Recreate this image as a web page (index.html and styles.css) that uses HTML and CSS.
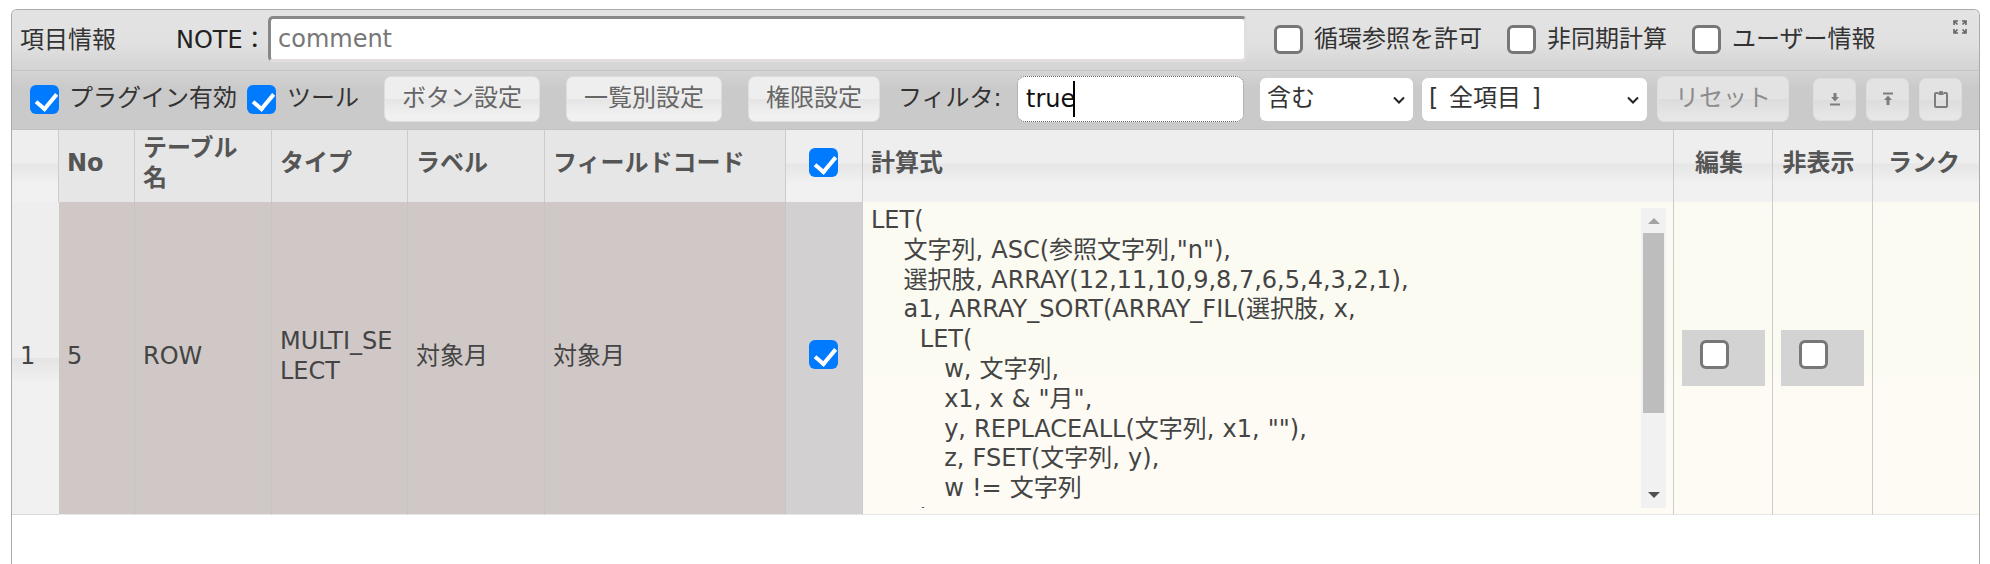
FILE: index.html
```html
<!DOCTYPE html>
<html lang="ja">
<head>
<meta charset="utf-8">
<title>項目情報</title>
<link rel="stylesheet" href="styles.css">
</head>
<body>
<section class="panel">
  <header class="topbar">
    <span class="title">項目情報</span>
    <label class="note-label" for="note">NOTE：</label>
    <input class="note-input" id="note" type="text" placeholder="comment">
    <label class="opt opt-first"><input class="cb" type="checkbox"><span>循環参照を許可</span></label>
    <label class="opt"><input class="cb" type="checkbox"><span>非同期計算</span></label>
    <label class="opt"><input class="cb" type="checkbox"><span>ユーザー情報</span></label>
    <svg class="fullscreen" viewBox="0 0 14 14" width="14" height="14" aria-hidden="true">
      <path d="M1 5V1h4M1 1l3.500 3.500M13 5V1H9M13 1 9.500 4.500M1 9v4h4M1 13l3.500-3.500M13 9v4H9M13 13 9.500 9.500"/>
    </svg>
  </header>

  <div class="toolbar">
    <label class="tool-check"><input class="cb" type="checkbox" checked><span>プラグイン有効</span></label>
    <label class="tool-check second"><input class="cb" type="checkbox" checked><span>ツール</span></label>
    <button class="btn first-btn" type="button">ボタン設定</button>
    <button class="btn" type="button">一覧別設定</button>
    <button class="btn" type="button">権限設定</button>
    <label class="filter-label" for="filter">フィルタ:</label>
    <div class="filter-box"><input class="filter-input" id="filter" type="text" value="true"><i class="caret"></i></div>
    <div class="sel sel-a">
      <select><option>含む</option></select>
      <svg class="chev" viewBox="0 0 12 8" width="12" height="8" aria-hidden="true"><path d="M1 1.500 6 6.500 11 1.500"/></svg>
    </div>
    <div class="sel sel-b">
      <select><option>[ 全項目 ]</option></select>
      <svg class="chev" viewBox="0 0 12 8" width="12" height="8" aria-hidden="true"><path d="M1 1.500 6 6.500 11 1.500"/></svg>
    </div>
    <button class="btn reset" type="button">リセット</button>
    <button class="icon-btn ib-first" type="button" aria-label="download">
      <svg viewBox="0 0 12 14" width="12" height="14"><path class="fill" d="M4.500 1h3v4H10L6 9.500 2 5h2.500z"/><path class="line" d="M1 12.500h10"/></svg>
    </button>
    <button class="icon-btn" type="button" aria-label="upload">
      <svg viewBox="0 0 12 14" width="12" height="14"><path class="line" d="M1 1.500h10"/><path class="fill" d="M6 3.500 10 8H7.500v5h-3V8H2z"/></svg>
    </button>
    <button class="icon-btn" type="button" aria-label="clipboard">
      <svg viewBox="0 0 14 18" width="14" height="18"><path class="line" d="M4.500 3H2a1 1 0 0 0-1 1v12a1 1 0 0 0 1 1h10a1 1 0 0 0 1-1V4a1 1 0 0 0-1-1H9.500"/><path class="fill" d="M4.500 3.500 5.500 1h3l1 2.500V5h-5z"/></svg>
    </button>
  </div>

  <table class="grid">
    <colgroup>
      <col class="c-num"><col class="c-no"><col class="c-table"><col class="c-type"><col class="c-label"><col class="c-code"><col class="c-check"><col class="c-formula"><col class="c-edit"><col class="c-hide"><col class="c-rank">
    </colgroup>
    <thead>
      <tr>
        <th class="shade"></th>
        <th class="flat">No</th>
        <th class="flat">テーブル<br>名</th>
        <th class="flat">タイプ</th>
        <th class="flat">ラベル</th>
        <th class="flat">フィールドコード</th>
        <th class="shade th-check"><input class="cb" type="checkbox" checked></th>
        <th class="shade">計算式</th>
        <th class="shade center">編集</th>
        <th class="shade center">非表示</th>
        <th class="shade center th-rank">ランク</th>
      </tr>
    </thead>
    <tbody>
      <tr>
        <td class="rownum">1</td>
        <td class="locked">5</td>
        <td class="locked">ROW</td>
        <td class="locked">MULTI_SE<br>LECT</td>
        <td class="locked">対象月</td>
        <td class="locked">対象月</td>
        <td class="locked-check"><input class="cb" type="checkbox" checked></td>
        <td class="formula-cell">
          <div class="formula">
            <pre class="code">LET(
    文字列, ASC(参照文字列,"n"),
    選択肢, ARRAY(12,11,10,9,8,7,6,5,4,3,2,1),
    a1, ARRAY_SORT(ARRAY_FIL(選択肢, x,
      LET(
         w, 文字列,
         x1, x &amp; "月",
         y, REPLACEALL(文字列, x1, ""),
         z, FSET(文字列, y),
         w != 文字列
      )</pre>
            <div class="scrollbar">
              <span class="arrow-up"></span>
              <span class="thumb"></span>
              <span class="arrow-down"></span>
            </div>
          </div>
        </td>
        <td class="pale"><div class="cb-wrap"><input class="cb" type="checkbox"></div></td>
        <td class="pale"><div class="cb-wrap"><input class="cb" type="checkbox"></div></td>
        <td class="pale"></td>
      </tr>
    </tbody>
  </table>
</section>
</body>
</html>
```

FILE: styles.css
```css
* {
  box-sizing: border-box;
}

html,
body {
  height: 100%;
}

body {
  margin: 0;
  padding: 9px 10px 0 11px;
  background: #fff;
  overflow: hidden;
  font-family: "DejaVu Sans", "Noto Sans CJK JP", sans-serif;
  font-size: 24px;
  line-height: 30px;
  word-spacing: 0.5px;
  color: #333;
}

.panel {
  height: 555px;
  border: 1px solid #aaa;
  border-bottom: 0;
  border-radius: 6px 6px 0 0;
  overflow: hidden;
  background: #fff;
}

/* top bar */
.topbar {
  position: relative;
  display: flex;
  align-items: center;
  height: 61px;
  padding: 0 0 2px 8px;
  border-bottom: 1px solid #c6c6c6;
  background: linear-gradient(#e3e3e3 0, #e1e1e1 55%, #d3d3d3 100%);
}

.title {
  width: 156px;
  flex: none;
  padding-top: 2px;
}

.note-label {
  width: 92px;
  flex: none;
  padding-top: 2px;
  color: #222;
}

.note-input {
  width: 979px;
  height: 46px;
  flex: none;
  padding: 0 7px;
  border: 3px solid;
  border-color: #888 #e2dedf #e2dedf #888;
  border-radius: 5px;
  background: #fff;
  font: inherit;
  color: #333;
  outline: 0;
}

.note-input::placeholder {
  color: #777;
  opacity: 1;
}

.opt {
  display: flex;
  align-items: center;
  gap: 11px;
  margin-left: 25px;
}

.opt-first {
  margin-left: 27px;
}

.fullscreen {
  position: absolute;
  top: 10px;
  right: 12px;
}

.fullscreen path {
  fill: none;
  stroke: #666;
  stroke-width: 1.600;
}

/* checkbox */
.cb {
  position: relative;
  flex: none;
  display: block;
  width: 29px;
  height: 29px;
  margin: 0;
  border: 3px solid #777;
  border-radius: 6px;
  background: #fff;
  appearance: none;
}

.cb:checked {
  border: 0;
  background: #007bff;
}

.cb:checked::after {
  content: "";
  position: absolute;
  left: 10px;
  top: 4px;
  width: 9px;
  height: 17px;
  border: solid #fff;
  border-width: 0 4.500px 4.500px 0;
  transform: rotate(40deg);
}

/* toolbar */
.toolbar {
  display: flex;
  align-items: center;
  height: 59px;
  padding: 0 0 2px 18px;
  background: linear-gradient(#d4d4d4 0, #cacaca 30%, #cacaca 100%);
  border-bottom: 1px solid #c2c2c2;
}

.tool-check {
  display: flex;
  align-items: center;
  gap: 10px;
}

.tool-check span {
  margin-top: -3px;
}

.tool-check.second {
  margin-left: 10px;
  gap: 11px;
}

.tool-check.second span {
  margin-right: 1px;
}

.btn {
  height: 46px;
  margin-left: 26px;
  padding: 0 17px 2px;
  border: 1px solid #ddd;
  border-radius: 7px;
  background: linear-gradient(#eee 0, #eee 50%, #e5e5e5 50%, #f1f1f1 88%);
  font: inherit;
  color: #666;
  word-spacing: 0;
}

.first-btn {
  margin-left: 24px;
}

.reset {
  width: 132px;
  margin-left: 10px;
  padding: 0 0 2px;
  color: #8c8c8c;
  background: linear-gradient(#e3e3e3 0, #e3e3e3 50%, #dcdcdc 50%, #e6e6e6 88%);
}

.filter-label {
  width: 119px;
  margin-left: 18px;
  flex: none;
  margin-top: -3px;
}

.filter-box {
  position: relative;
  width: 227px;
  height: 46px;
  flex: none;
}

.filter-input {
  display: block;
  width: 100%;
  height: 100%;
  padding: 0 8px;
  border: 1px dotted #666;
  border-radius: 8px;
  background: #fff;
  font: inherit;
  color: #111;
  outline: 0;
}

.caret {
  position: absolute;
  left: 56px;
  top: 5px;
  width: 2px;
  height: 36px;
  background: #000;
}

.sel {
  position: relative;
  height: 43px;
  flex: none;
}

.sel-a {
  width: 153px;
  margin-left: 16px;
}

.sel-b {
  width: 225px;
  margin-left: 9px;
}

.sel select {
  display: block;
  width: 100%;
  height: 100%;
  padding: 0 0 2px 7px;
  border: 0;
  border-radius: 6px;
  background: #fff;
  font: inherit;
  color: #333;
  word-spacing: 3px;
  appearance: none;
}

.chev {
  position: absolute;
  right: 8px;
  top: 18px;
}

.chev path {
  fill: none;
  stroke: #222;
  stroke-width: 2;
}

.icon-btn {
  display: flex;
  align-items: center;
  justify-content: center;
  width: 43px;
  height: 43px;
  flex: none;
  margin-left: 10px;
  padding: 0;
  border: 1px solid #ddd;
  border-radius: 7px;
  background: linear-gradient(#e3e3e3 0, #e3e3e3 50%, #dcdcdc 50%, #e6e6e6 88%);
}

.ib-first {
  margin-left: 24px;
}

.icon-btn .fill {
  fill: #7d7d7d;
}

.icon-btn .line {
  fill: none;
  stroke: #7d7d7d;
  stroke-width: 2;
}

/* table */
.grid {
  width: 1967px;
  table-layout: fixed;
  border-collapse: separate;
  border-spacing: 0;
}

.c-num { width: 47px; }
.c-no { width: 76px; }
.c-table { width: 137px; }
.c-type { width: 136px; }
.c-label { width: 137px; }
.c-code { width: 241px; }
.c-check { width: 77px; }
.c-formula { width: 811px; }
.c-edit { width: 99px; }
.c-hide { width: 100px; }
.c-rank { width: 106px; }

th {
  height: 72px;
  padding: 0 7px 6px 8px;
  border-right: 1px solid #ccc;
  text-align: left;
  font-weight: 700;
  color: #555;
}

th:last-child,
td:last-child {
  border-right: 0;
}

.flat {
  background: #e6e6e6;
}

.shade {
  background: linear-gradient(#eee 0, #eee 46%, #e6e6e6 47%, #f1f1f1 75%);
}

th.center {
  padding: 0 8px 6px 0;
  text-align: center;
}

th.th-rank {
  padding-right: 4px;
}

th.th-check {
  padding: 0 1px 8px 0;
}

.th-check .cb {
  margin: 0 auto;
}

tbody tr {
  height: 313px;
}

td {
  height: 313px;
  padding: 0 7px 5px 8px;
  border-bottom: 1px solid #e6e6e6;
  border-right: 1px solid #ccc;
  color: #444;
}

.rownum {
  padding-left: 8px;
  background: linear-gradient(#eee 0, #eee 50%, #e4e4e4 50%, #f1f1f1 58%);
  border-right: 0;
  border-bottom-color: #d8d8d8;
}

.locked {
  background: #d0c8c6;
  border-right-color: #c8c4c2;
}

.locked-check {
  padding: 0 1px 7px 0;
  background: #d2d0d1;
  border-right-color: #ccc;
}

.locked-check .cb {
  margin: 0 auto;
}

.formula-cell,
.pale {
  background: linear-gradient(#fbfbf3 0, #fbfbf1 50%, #fdfbf4 58%);
}

.formula-cell {
  padding: 6px 7px 6px 8px;
  vertical-align: top;
}

.formula {
  display: flex;
  height: 300px;
  overflow: hidden;
}

.code {
  flex: 1;
  min-width: 0;
  margin: -2px 0 -4px;
  font: inherit;
  line-height: 29.800px;
  color: #444;
  overflow: hidden;
}

.scrollbar {
  display: flex;
  flex-direction: column;
  align-items: center;
  width: 25px;
  flex: none;
  background: #f1f1f1;
}

.arrow-up {
  margin-top: 10px;
  border: solid transparent;
  border-width: 0 6px 6px;
  border-bottom-color: #a3a3a3;
}

.thumb {
  width: 21px;
  height: 180px;
  margin-top: 9px;
  background: #bdbdbd;
}

.arrow-down {
  margin-top: auto;
  margin-bottom: 10px;
  border: solid transparent;
  border-width: 6px 6px 0;
  border-top-color: #505050;
}

.pale {
  padding: 0 0 0 8px;
}

.cb-wrap {
  width: 83px;
  height: 56px;
  padding: 10px 0 0 18px;
  background: #d3d3d3;
}
```
